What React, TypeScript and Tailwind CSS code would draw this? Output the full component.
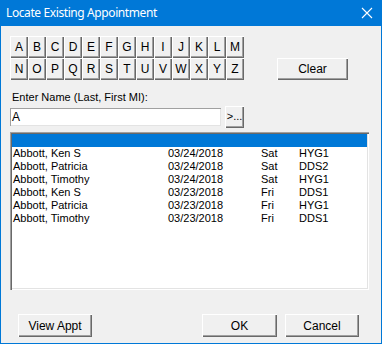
import React from "react";

const letters1 = "ABCDEFGHIJKLM".split("");
const letters2 = "NOPQRSTUVWXYZ".split("");

const rows = [
  ["Abbott, Ken S", "03/24/2018", "Sat", "HYG1"],
  ["Abbott, Patricia", "03/24/2018", "Sat", "DDS2"],
  ["Abbott, Timothy", "03/24/2018", "Sat", "HYG1"],
  ["Abbott, Ken S", "03/23/2018", "Fri", "DDS1"],
  ["Abbott, Patricia", "03/23/2018", "Fri", "HYG1"],
  ["Abbott, Timothy", "03/23/2018", "Fri", "DDS1"],
];

const btn =
  "bg-[#f0f0f0] shadow-[inset_1px_1px_0_#ffffff,inset_-1px_-1px_0_#696969,inset_-2px_-2px_0_#a0a0a0] flex items-center justify-center text-black";

function LetterRow({ letters }: { letters: string[] }) {
  return (
    <div className="flex">
      {letters.map((l) => (
        <div key={l} className={`${btn} w-[18px] h-[22px] text-[12px]`}>
          {l}
        </div>
      ))}
    </div>
  );
}

export default function App() {
  return (
    <div
      className="w-[382px] h-[344px] bg-[#f0f0f0] border-x border-b border-[#0078d7] flex flex-col text-[11px] text-black"
      style={{ fontFamily: '"Liberation Sans", Arial, sans-serif' }}
    >
      <div className="h-[26px] bg-[#0078d7] -mx-px flex items-center justify-between pl-[6px] pr-[9px] shrink-0">
        <span
          className="text-white text-[12px] leading-none tracking-[-0.4px]"
          style={{ fontFamily: '"Noto Sans", "Liberation Sans", sans-serif' }}
        >
          Locate Existing Appointment
        </span>
        <svg width="12" height="12" viewBox="0 0 12 12">
          <path d="M1 1 L11 11 M11 1 L1 11" stroke="#ffffff" strokeWidth="1.1" />
        </svg>
      </div>
      <div className="flex flex-col pl-[9px] pt-[10px]">
        <div className="flex items-end">
          <div className="flex flex-col">
            <LetterRow letters={letters1} />
            <LetterRow letters={letters2} />
          </div>
          <div className={`${btn} ml-[33px] w-[71px] h-[22px] text-[12px]`}>Clear</div>
        </div>
        <div className="mt-[10px] h-[14px] leading-[14px] pl-[2px]">Enter Name (Last, First MI):</div>
        <div className="flex items-center mt-[2px] h-[22px]">
          <div className="w-[211px] h-[18px] bg-white shadow-[inset_1px_1px_0_#a0a0a0,inset_-1px_-1px_0_#e3e3e3] flex items-center pl-[2px] text-[12px]">
            A
          </div>
          <div className={`${btn} ml-[4px] w-[19px] h-[22px] text-[11px] pb-[2px]`}>&gt;...</div>
        </div>
        <div className="mt-[4px] w-[359px] h-[158px] bg-white shadow-[inset_1px_1px_0_#a0a0a0,inset_2px_2px_0_#696969,inset_-1px_-1px_0_#ffffff,inset_-2px_-2px_0_#e3e3e3] pt-[2px] pl-[2px] pr-[2px] text-[11px]">
          <div className="h-[13px] bg-[#0078d7]" />
          {rows.map((r, i) => (
            <div key={i} className="h-[13px] leading-[13px] flex">
              <span className="w-[156px] pl-[1px]">{r[0]}</span>
              <span className="w-[93px]">{r[1]}</span>
              <span className="w-[38px]">{r[2]}</span>
              <span>{r[3]}</span>
            </div>
          ))}
        </div>
        <div className="flex mt-[24px] h-[23px]">
          <div className={`${btn} ml-[8px] w-[74px] h-[23px] text-[12px]`}>View Appt</div>
          <div className={`${btn} ml-[110px] w-[75px] h-[23px] text-[12px]`}>OK</div>
          <div className={`${btn} ml-[8px] w-[74px] h-[23px] text-[12px]`}>Cancel</div>
        </div>
      </div>
    </div>
  );
}
